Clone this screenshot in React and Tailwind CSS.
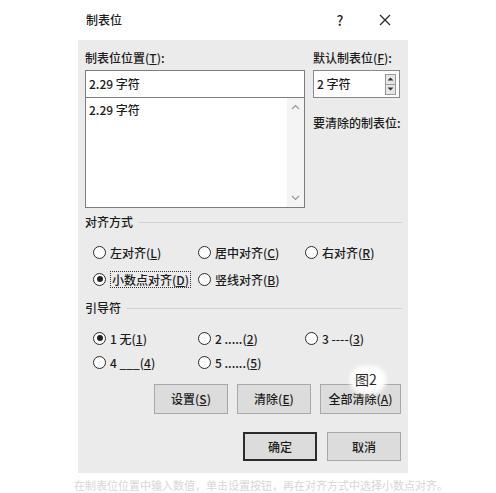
import React from "react";

const Radio = ({ checked }) => (
  <span className="relative inline-flex w-[13px] h-[13px] rounded-full border border-[#2a2a2a] bg-white items-center justify-center shrink-0">
    {checked && <span className="w-[6px] h-[6px] rounded-full bg-[#222]" />}
  </span>
);

const Opt = ({ checked, children, focus }) => (
  <div className="flex items-center h-[20px] gap-[4px]">
    <Radio checked={checked} />
    {focus ? (
      <span className="border border-dotted border-[#333] px-[1px] h-[17px] leading-[15px]">{children}</span>
    ) : (
      <span className="leading-[15px]">{children}</span>
    )}
  </div>
);

const Btn = ({ w, children, def }) => (
  <div
    className={`flex items-center justify-center bg-[#dcdcdc] ${w} ${
      def ? "border-2 border-[#2b2b2b]" : "border border-[#a8a8a8]"
    } font-medium`}
  >
    {children}
  </div>
);

export default function App() {
  return (
    <div
      className="relative w-[496px] h-[493px] bg-white overflow-hidden text-[12px] text-[#1c1c1c]"
      style={{ fontFamily: '"Noto Sans CJK SC", "Noto Sans", sans-serif' }}
    >
      <div className="ml-[78px] w-[330px]">
        {/* title bar */}
        <div className="h-[40px] flex items-center pl-[8px] pr-[15px] bg-white">
          <span className="flex-1 text-[12px] font-medium">制表位</span>
          <span className="w-[16px] text-center text-[14px] font-medium">?</span>
          <span className="ml-[29px] w-[16px] flex justify-center">
            <svg width="12" height="12" viewBox="0 0 12 12">
              <path d="M1 1 L11 11 M11 1 L1 11" stroke="#2a2a2a" strokeWidth="1.3" />
            </svg>
          </span>
        </div>

        {/* body */}
        <div className="h-[433px] bg-[#ebebeb] pt-[11px] pl-[7px] pr-[6px] font-medium">
          <div className="flex gap-[8px]">
            <div className="w-[220px]">
              <div className="h-[14px] leading-[14px]">
                制表位位置(<u>T</u>):
              </div>
              <div className="mt-[5px] h-[28px] border border-[#7d7d7d] bg-white flex items-center pl-[3px]">
                2.29 字符
              </div>
              <div className="h-[110px] border border-[#7d7d7d] border-t-0 bg-white flex">
                <div className="flex-1 pl-[3px] pt-[3px]">2.29 字符</div>
                <div className="w-[17px] bg-[#f4f4f4] flex flex-col items-center justify-between py-[6px]">
                  <svg width="9" height="6" viewBox="0 0 9 6">
                    <path d="M1 5 L4.5 1.5 L8 5" stroke="#9a9a9a" strokeWidth="1.2" fill="none" />
                  </svg>
                  <svg width="9" height="6" viewBox="0 0 9 6">
                    <path d="M1 1 L4.5 4.5 L8 1" stroke="#9a9a9a" strokeWidth="1.2" fill="none" />
                  </svg>
                </div>
              </div>
            </div>
            <div className="w-[87px]">
              <div className="h-[14px] leading-[14px] whitespace-nowrap">
                默认制表位(<u>F</u>):
              </div>
              <div className="mt-[5px] h-[28px] border border-[#8a8a8a] bg-white flex items-center pl-[3px] pr-[3px]">
                <span className="flex-1">2 字符</span>
                <div className="w-[11px] h-[21px] flex flex-col border border-[#9a9a9a]">
                  <div className="flex-1 flex items-center justify-center bg-[#e6e6e6] border-b border-[#9a9a9a]">
                    <svg width="7" height="4" viewBox="0 0 7 4">
                      <path d="M0.5 3.5 L3.5 0.5 L6.5 3.5 Z" fill="#333" />
                    </svg>
                  </div>
                  <div className="flex-1 flex items-center justify-center bg-[#e6e6e6]">
                    <svg width="7" height="4" viewBox="0 0 7 4">
                      <path d="M0.5 0.5 L3.5 3.5 L6.5 0.5 Z" fill="#333" />
                    </svg>
                  </div>
                </div>
              </div>
              <div className="mt-[18px] h-[14px] leading-[14px] whitespace-nowrap">要清除的制表位:</div>
            </div>
          </div>

          {/* 对齐方式 */}
          <div className="mt-[7px] flex items-center h-[14px]">
            <span className="leading-[14px]">对齐方式</span>
            <div className="flex-1 ml-[6px] h-px bg-[#d2d2d2]" />
          </div>
          <div className="mt-[13px] pl-[8px] grid grid-cols-[105px_107px_1fr] gap-y-[7px]">
            <Opt>左对齐(<u>L</u>)</Opt>
            <Opt>居中对齐(<u>C</u>)</Opt>
            <Opt>右对齐(<u>R</u>)</Opt>
            <Opt checked focus>
              小数点对齐(<u>D</u>)
            </Opt>
            <Opt>竖线对齐(<u>B</u>)</Opt>
          </div>

          {/* 引导符 */}
          <div className="mt-[12px] flex items-center h-[14px]">
            <span className="leading-[14px]">引导符</span>
            <div className="flex-1 ml-[6px] h-px bg-[#d2d2d2]" />
          </div>
          <div className="mt-[13px] pl-[8px] grid grid-cols-[105px_107px_1fr] gap-y-[4px]">
            <Opt checked>1 无(<u>1</u>)</Opt>
            <Opt>2 .....(<u>2</u>)</Opt>
            <Opt>3 ----(<u>3</u>)</Opt>
            <Opt>4 ___(<u>4</u>)</Opt>
            <Opt>5 ......(<u>5</u>)</Opt>
          </div>

          {/* buttons */}
          <div className="mt-[12px] flex justify-end gap-[9px] pr-[1px] h-[30px]">
            <Btn w="w-[74px]">设置(<u>S</u>)</Btn>
            <Btn w="w-[74px]">清除(<u>E</u>)</Btn>
            <Btn w="w-[81px]">全部清除(<u>A</u>)</Btn>
          </div>
          <div className="mt-[18px] flex justify-end gap-[10px] pr-[1px] h-[29px]">
            <Btn w="w-[74px]" def>
              确定
            </Btn>
            <Btn w="w-[74px]">取消</Btn>
          </div>
        </div>
      </div>

      {/* faint text of the page below */}
      <div className="mt-[6px] ml-[74px] whitespace-nowrap text-[11px] text-[#d6d6d6] leading-[12px]">
        在制表位位置中输入数值，单击设置按钮，再在对齐方式中选择小数点对齐。
      </div>

      {/* 图2 overlay label */}
      <div className="absolute left-[350px] top-[366px] w-[36px] h-[28px] rounded-full bg-white blur-[2px]" />
      <div
        className="absolute left-[355px] top-[371px] text-[14px] leading-[17px] text-[#2a2a2a]"
        style={{ fontFamily: '"Noto Sans CJK SC", "Liberation Serif", serif' }}
      >
        图2
      </div>
    </div>
  );
}
